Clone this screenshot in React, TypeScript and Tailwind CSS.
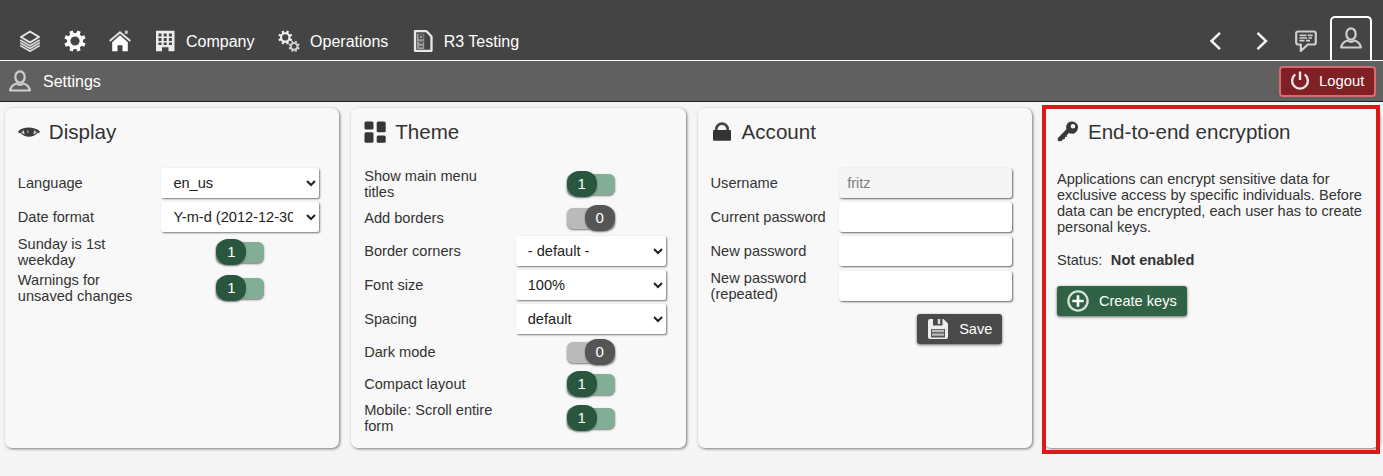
import React from "react";
import type { ReactNode } from "react";

function Icon({ children }: { children: ReactNode }) {
  return (
    <svg viewBox="0 0 22 22" className="h-[22px] w-[22px] shrink-0" fill="none">
      {children}
    </svg>
  );
}

const COG_TEETH = [0, 45, 90, 135, 180, 225, 270, 315];

function Cog({ color, ring = 3.2 }: { color: string; ring?: number }) {
  return (
    <g>
      <circle cx="11" cy="11" r="6.300" stroke={color} strokeWidth={ring} />
      {COG_TEETH.map((angle) => (
        <path key={angle} d="M9.300 .300h3.400l.3 4.500h-4z" fill={color} transform={`rotate(${angle + 22.5} 11 11)`} />
      ))}
    </g>
  );
}

const LayersIcon = () => (
  <Icon>
    <path d="M11 1.500 20 7l-9 5.500L2 7z" stroke="#e8e8e8" strokeWidth="2" strokeLinejoin="round" />
    <path d="m1.200 10 9.800 5.800L20.800 10M1.200 12.700 11 18.500l9.800-5.800M1.200 15.400 11 21.200l9.800-5.800" stroke="#d8d8d8" strokeWidth="1.700" />
  </Icon>
);
const GearIcon = () => (
  <Icon>
    <Cog color="#fff" ring={3.4} />
  </Icon>
);
const HomeIcon = () => (
  <Icon>
    <path d="m.7 11 10.300-8.700L21.300 11" stroke="#e4e4e4" strokeWidth="2" />
    <path d="M15.800 .6h3v3.200h-3z" fill="#c4c4c4" />
    <path d="M11 5.300 18.800 12.300v9h-5.300v-6h-5v6H3.200v-9z" fill="#fff" />
  </Icon>
);
const BuildingIcon = () => (
  <Icon>
    <path
      fill="#ececec"
      fillRule="evenodd"
      d="M2 .8h18.500v20.500h-6v-4H8v4H2zM4.500 3.500v3h3v-3zm5.200 0v3h3v-3zm5.200 0v3h3v-3zM4.500 8v3h3V8zm5.200 0v3h3V8zm5.200 0v3h3V8zM4.500 12.500v2.500h3v-2.500zm5.200 0v2.500h3v-2.500zm5.200 0v2.500h3v-2.500z"
    />
  </Icon>
);
const GearsIcon = () => (
  <Icon>
    <g transform="translate(0 .2) scale(.66)">
      <Cog color="#eee" />
    </g>
    <g transform="translate(10.300 10.600) scale(.53)">
      <Cog color="#d0d0d0" ring={3.6} />
    </g>
  </Icon>
);
const DocumentIcon = () => (
  <Icon>
    <path d="M3 1.200h11.500L19.500 6.500v14.300H3z" stroke="#e8e8e8" strokeWidth="2.300" strokeLinejoin="round" />
    <path d="M4.800 3.800h7.400V19H4.800z" fill="#9c9c9c" />
    <path d="M7.200 5h3.600v3.600H7.200zM6.800 11.300l3.500 2.700m1-3-2 2M7 16.700h4" stroke="#4c4c4c" strokeWidth="1.300" />
  </Icon>
);
const ChevronIcon = ({ right = false }: { right?: boolean }) => (
  <Icon>
    <path d={right ? "m6.500 2.800 8.500 8.200-8.500 8.200" : "M15 2.800 6.500 11l8.500 8.200"} stroke="#f4f4f4" strokeWidth="2.500" />
  </Icon>
);
const MessageIcon = () => (
  <Icon>
    <path d="M3.200 1.500h15.600q2 0 2 2v9q0 2-2 2h-6l-7 6.500v-6.500H3.200q-2 0-2-2v-9q0-2 2-2z" stroke="#cfcfcf" strokeWidth="2.200" strokeLinejoin="round" />
    <path d="M4.500 5.300h7m1.200 0h5M4.500 8h7.500m1.500 0h3.500M4.500 10.700h5m1.500 0h4" stroke="#cfcfcf" strokeWidth="1.700" />
  </Icon>
);
const PersonIcon = () => (
  <Icon>
    <ellipse cx="11" cy="7" rx="4.700" ry="5.700" stroke="#cecece" strokeWidth="2.200" />
    <path d="M7.500 13.500C4 14.500 1.700 16.500 1.200 20.500h19.600c-.5-4-2.800-6-6.300-7-2 1.600-5 1.600-7 0z" stroke="#cecece" strokeWidth="2.200" strokeLinejoin="round" />
  </Icon>
);
const PowerIcon = () => (
  <Icon>
    <path d="M6.300 4.400a7.900 7.900 0 1 0 9.400 0M11 1.500v8.500" stroke="#e8e8e8" strokeWidth="2.400" />
  </Icon>
);
const EyeIcon = () => (
  <Icon>
    <path d="M.2 10.300C5 5.300 16 5.300 21.800 10.300l-.6 2-1.600-.6C15.500 17 6.500 17 2.400 11.700l-1.600.6z" fill="#3c3c3c" />
    <path d="M3.700 11.300c.6-.8 1.200-1.300 2-1.600-.1 1.200.1 2.200.7 3.200-1-.3-1.900-.8-2.700-1.600zM18.300 11.300c-.6-.8-1.200-1.300-2-1.600.1 1.200-.1 2.200-.7 3.200 1-.3 1.900-.8 2.700-1.600z" fill="#dcdcdc" stroke="#dcdcdc" strokeWidth=".6" />
    <path d="M9 9.500h1.500v2.500H9z" fill="#999" />
  </Icon>
);
const ThemeIcon = () => (
  <Icon>
    <g fill="#363636">
      <rect x=".5" y=".5" width="9" height="8" rx="1.500" />
      <rect x=".5" y="11.300" width="9" height="10.400" rx="1.500" />
      <rect x="12.700" y=".5" width="9" height="10.800" rx="1.500" />
      <rect x="12.700" y="14.600" width="9" height="7.100" rx="1.500" />
    </g>
  </Icon>
);
const LockIcon = () => (
  <Icon>
    <path d="M5.300 11V8.300a5.700 5.700 0 0 1 11.400 0V11" stroke="#444" strokeWidth="2.600" />
    <rect x="2" y="9" width="18" height="10.700" rx="1" fill="#333" />
  </Icon>
);
const KeyIcon = () => (
  <Icon>
    <path
      fillRule="evenodd"
      fill="#383838"
      d="M11.500 1.500c3-2 7-1 8.700 1.800 1.700 3 .6 6.800-2.200 8.600-2 1.200-4.300 1-6 .2l-2.200 2.200.2 1.500-2 .3-.2 2-2 .3-1.500 1.900-3.300-.2-.3-2.900 8.700-8.900c-.6-2.500 0-5.300 2.100-6.800zM16 3a2.300 2.300 0 1 0 0 4.600A2.300 2.300 0 0 0 16 3z"
    />
  </Icon>
);
const SaveIcon = () => (
  <Icon>
    <path d="M3 1h13.500L21 5.500V19q0 2-2 2H3q-2 0-2-2V3q0-2 2-2z" fill="#eee" />
    <path d="M6 .8h9.500v6.700H6z" fill="#4a4a4a" />
    <path d="M10.800 1h2.400v5h-2.400z" fill="#ddd" />
    <path d="M4 11h14v8.500H4z" fill="#555" />
    <path d="M5 13h12M5 16.700h12" stroke="#bbb" strokeWidth="2.300" />
  </Icon>
);
const AddIcon = () => (
  <Icon>
    <circle cx="11" cy="11" r="9.600" stroke="#d5e1d9" strokeWidth="2.300" />
    <path d="M11 5.300v11.400M5.300 11h11.400" stroke="#fff" strokeWidth="2.600" />
  </Icon>
);

function MenuItem({ icon, label, className }: { icon: ReactNode; label: string; className: string }) {
  return (
    <a className={`flex items-center gap-[10px] ${className}`}>
      {icon}
      <span className="pt-[2px]">{label}</span>
    </a>
  );
}

function Card({ icon, title, children }: { icon: ReactNode; title: string; children: ReactNode }) {
  return (
    <section className="relative h-[340px] flex-1 basis-0 rounded-[7px] bg-[#f8f8f8] pt-[13px] pl-[12.800px] shadow-[1px_1px_3px_#777]">
      <h2 className="flex h-[22px] items-center gap-[9px] text-[20.6px] text-[#333]">
        {icon}
        <span>{title}</span>
      </h2>
      <div className="pt-[23px]">{children}</div>
    </section>
  );
}

function Row({ label, height, column, children }: { label: string; height: string; column: string; children: ReactNode }) {
  return (
    <div className={`flex items-center justify-between ${height}`}>
      <div className="max-w-[132px] leading-4">{label}</div>
      <div className={`flex shrink-0 justify-center ${column}`}>{children}</div>
    </div>
  );
}

function Toggle({ on }: { on: boolean }) {
  return (
    <div
      className={`flex h-[21px] w-[48px] items-center rounded-[6px] shadow-[0_1px_2px_#777] ${
        on ? "justify-start bg-[#83ad95]" : "justify-end bg-[#bababa]"
      }`}
    >
      <span
        className={`flex h-[26px] w-[30px] shrink-0 items-center justify-center rounded-[12px] text-[15px] text-white shadow-[0_1px_2px_#777] ${
          on ? "bg-[#29573e]" : "bg-[#555]"
        }`}
      >
        {on ? 1 : 0}
      </span>
    </div>
  );
}

function Select({ value }: { value: string }) {
  return (
    <select className="h-[30px] w-full rounded-[2px] bg-white pr-[10px] pl-2 text-[14.600px] text-[#222] shadow-[1px_1px_2px_#777]">
      <option>{value}</option>
    </select>
  );
}

function Field({ value, disabled = false }: { value?: string; disabled?: boolean }) {
  return (
    <input
      defaultValue={value}
      disabled={disabled}
      className="h-[30px] w-full rounded-[3px] bg-white px-2 text-[14.600px] shadow-[1px_1px_2px_#666] disabled:bg-[#f5f5f5] disabled:text-[#808080]"
    />
  );
}

export default function App() {
  const display = "w-[158px]";
  const theme = "w-[150px]";
  const account = "w-[173px]";
  return (
    <div className="h-[476px] w-[1383px] overflow-hidden bg-[#f5f5f5] font-['Liberation_Sans',Arial,sans-serif] text-[14.600px] text-[#333]">
      <header className="flex h-[61px] items-end justify-between border-b border-white bg-[#444] text-[16px] text-white">
        <nav className="flex h-[38px] items-center pl-[19px]">
          <LayersIcon />
          <span className="ml-[23px] flex"><GearIcon /></span>
          <span className="ml-[23px] flex"><HomeIcon /></span>
          <MenuItem className="ml-[23px]" icon={<BuildingIcon />} label="Company" />
          <MenuItem className="ml-[23.600px]" icon={<GearsIcon />} label="Operations" />
          <MenuItem className="ml-[23.400px]" icon={<DocumentIcon />} label="R3 Testing" />
        </nav>
        <div className="flex items-end pr-[11px]">
          <div className="flex h-[38px] items-center">
            <ChevronIcon />
            <span className="ml-[24px] flex"><ChevronIcon right /></span>
            <span className="ml-[22px] flex"><MessageIcon /></span>
          </div>
          <div className="ml-[13px] flex h-[44px] w-[42px] justify-center rounded-t-[5px] border-2 border-b-0 border-white pt-[9px]">
            <PersonIcon />
          </div>
        </div>
      </header>
      <div className="flex h-[41px] items-center justify-between border-b border-[#222] bg-[#606060] pr-[7px] pl-[9px] text-[16px] text-white">
        <div className="flex items-center gap-[12px]">
          <PersonIcon />
          <span className="pt-px">Settings</span>
        </div>
        <button className="flex h-[31px] w-[97px] items-center gap-[8px] rounded-[4px] border-2 border-[#d96a6f] bg-[#802024] pl-[8px] text-[14.800px]">
          <PowerIcon />
          <span>Logout</span>
        </button>
      </div>

      <main className="flex gap-[12px] pt-[6px] pr-[4.500px] pl-[5px]">
        <Card icon={<EyeIcon />} title="Display">
          <div className="pr-[20px]">
            <Row label="Language" height="h-[34px]" column={display}><Select value="en_us" /></Row>
            <Row label="Date format" height="h-[34px]" column={display}><Select value="Y-m-d (2012-12-30)" /></Row>
            <Row label="Sunday is 1st weekday" height="h-[36px]" column={display}><Toggle on /></Row>
            <Row label="Warnings for unsaved changes" height="h-[36px]" column={display}><Toggle on /></Row>
          </div>
        </Card>
        <Card icon={<ThemeIcon />} title="Theme">
          <div className="pr-[20px]">
            <Row label="Show main menu titles" height="h-[36px]" column={theme}><Toggle on /></Row>
            <Row label="Add borders" height="h-[32px]" column={theme}><Toggle on={false} /></Row>
            <Row label="Border corners" height="h-[34px]" column={theme}><Select value="- default -" /></Row>
            <Row label="Font size" height="h-[34px]" column={theme}><Select value="100%" /></Row>
            <Row label="Spacing" height="h-[34px]" column={theme}><Select value="default" /></Row>
            <Row label="Dark mode" height="h-[32px]" column={theme}><Toggle on={false} /></Row>
            <Row label="Compact layout" height="h-[32px]" column={theme}><Toggle on /></Row>
            <Row label="Mobile: Scroll entire form" height="h-[36px]" column={theme}><Toggle on /></Row>
          </div>
        </Card>
        <Card icon={<LockIcon />} title="Account">
          <div className="pr-[20px]">
            <Row label="Username" height="h-[34px]" column={account}><Field value="fritz" disabled /></Row>
            <Row label="Current password" height="h-[34px]" column={account}><Field /></Row>
            <Row label="New password" height="h-[34px]" column={account}><Field /></Row>
            <Row label="New password (repeated)" height="h-[36px]" column={account}><Field /></Row>
            <div className="flex justify-end pt-[10px] pr-[10px]">
              <button className="flex h-[30px] w-[85px] items-center gap-[10px] rounded-[3px] bg-[#4a4a4a] pl-[10px] text-[14.600px] text-white shadow-[0_1px_3px_#666]">
                <SaveIcon />
                <span className="pt-px">Save</span>
              </button>
            </div>
          </div>
        </Card>
        <Card icon={<KeyIcon />} title="End-to-end encryption">
          <p className="w-[315px] pt-[5px] leading-4">
            Applications can encrypt sensitive data for exclusive access by specific individuals. Before data can be
            encrypted, each user has to create personal keys.
          </p>
          <p className="flex gap-[8.500px] pt-[17px] leading-4">
            <span>Status:</span>
            <b>Not enabled</b>
          </p>
          <button className="mt-[18px] flex h-[30px] w-[130px] items-center gap-[10px] rounded-[3px] bg-[#306346] pl-[10px] text-[14.600px] text-white shadow-[0_1px_3px_#666]">
            <AddIcon />
            <span className="pt-px">Create keys</span>
          </button>
          <div className="pointer-events-none absolute -top-[3px] -right-[1px] -bottom-[6px] -left-[2px] border-4 border-[#da1919]" />
        </Card>
      </main>
    </div>
  );
}
